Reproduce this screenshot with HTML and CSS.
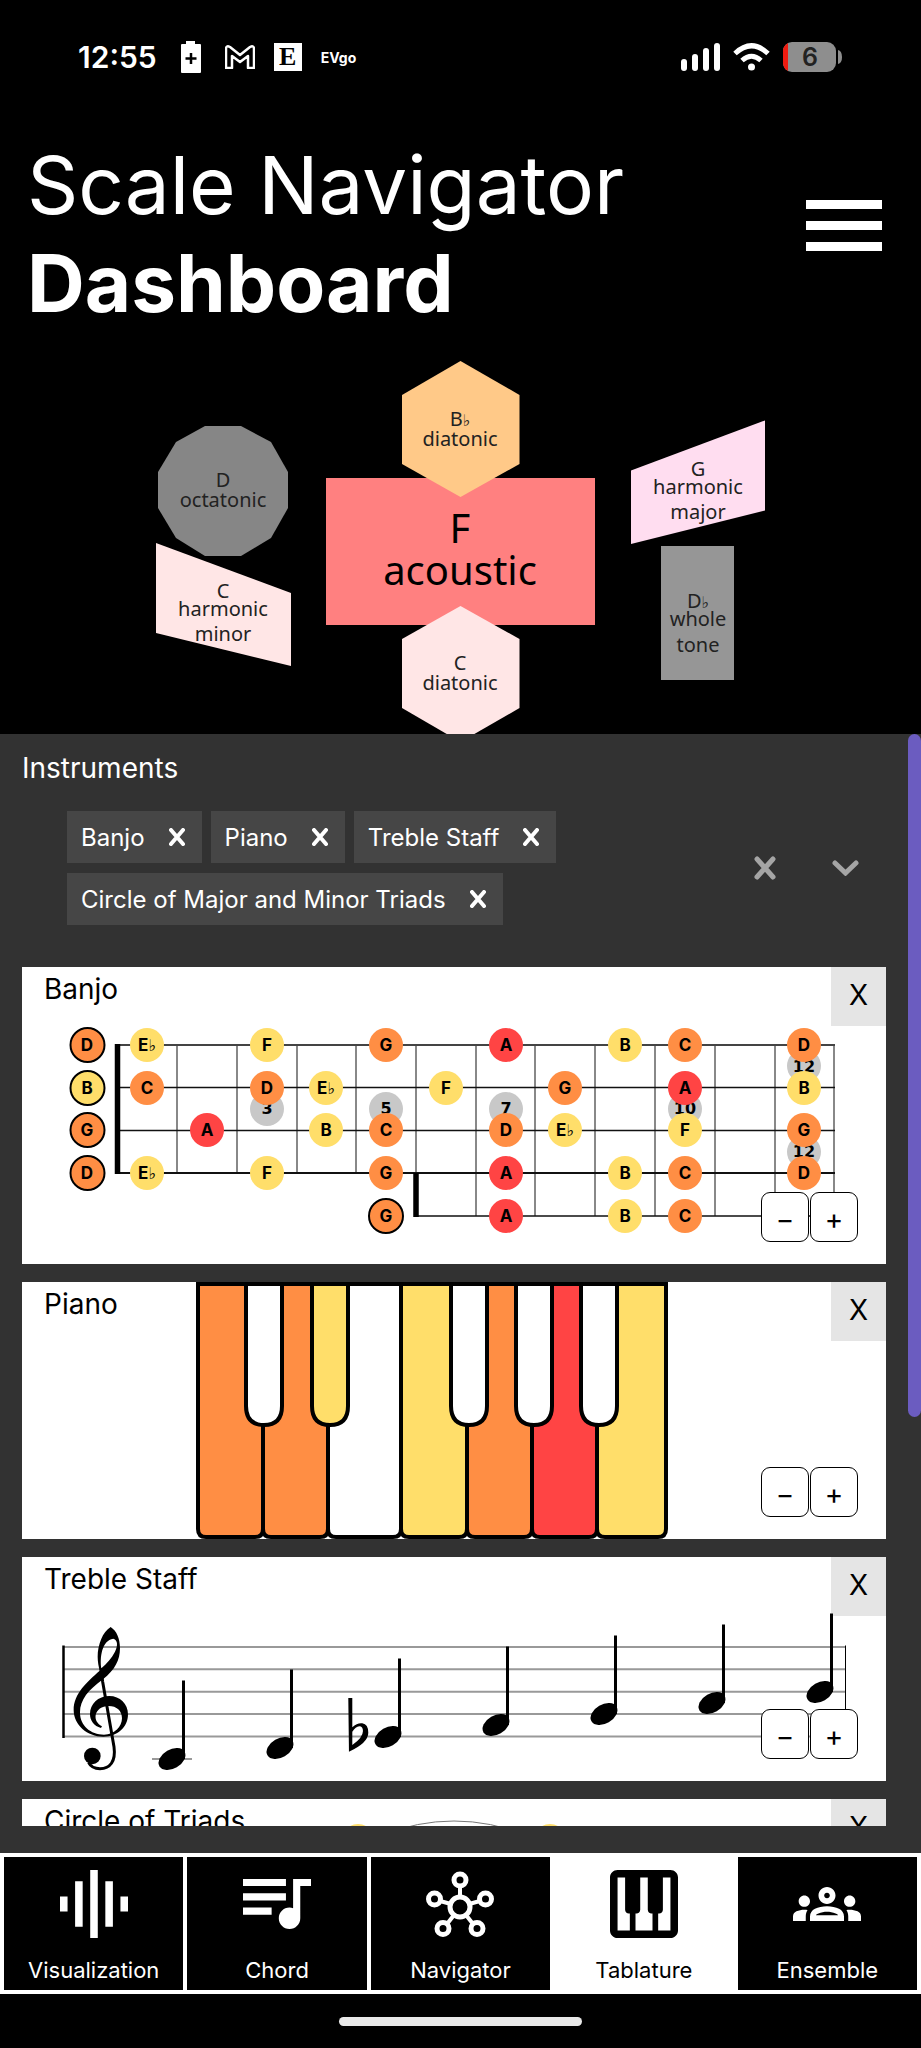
FILE: index.html
```html
<!DOCTYPE html>
<html lang="en">
  <head>
    <meta charset="UTF-8" />
    <meta name="viewport" content="width=device-width, initial-scale=1.0" />
    <title>Scale Navigator Dashboard</title>
    <link rel="stylesheet" href="styles.css">
  </head>
  <body>
    <div class="app">
      <div class="status">
        <div class="status_left">
          <span class="time">12:55</span>
          <svg width="30" height="32" viewBox="0 0 30 32">
            <path fill="#fff" d="M10 0h9v3h5q1 0 1 1v27q0 1-1 1H6q-1 0-1-1V4q0-1 1-1h4z" />
            <path stroke="#000" stroke-width="2.5" d="M15 12v11M9.5 17.5h11" />
          </svg>
          <svg width="30" height="24" viewBox="0 0 30 24">
            <path fill="none" stroke="#fff" stroke-width="2.5" stroke-linejoin="round" d="M1 4q0-4 4-2l10 8 10-8q4-2 4 2v19h-6V11l-8 6-8-6v12H1z" />
          </svg>
          <span class="news">E</span>
          <span class="evgo">EVgo</span>
        </div>
        <div class="status_right">
          <svg width="39" height="28" viewBox="0 0 39 28" fill="#fff">
            <rect x="0" y="16" width="6" height="12" rx="3" />
            <rect x="11" y="11" width="6" height="17" rx="3" />
            <rect x="22" y="5" width="6" height="23" rx="3" />
            <rect x="33" y="0" width="6" height="28" rx="3" />
          </svg>
          <svg width="37" height="28" viewBox="0 0 37 28" fill="none" stroke="#fff" stroke-width="5">
            <path d="M2 10.5Q18.500-5 35 10.5" />
            <path d="M9 17.5Q18.5 9 28 17.5" />
            <circle cx="18.5" cy="24" r="3.5" fill="#fff" stroke="none" />
          </svg>
          <svg width="59" height="30" viewBox="0 0 59 30">
            <rect width="53" height="30" rx="9" fill="#8e8e8e" />
            <path fill="#f01b10" d="M5 1v28Q0 26 0 21V9Q0 4 5 1z" />
            <path fill="#8e8e8e" d="M55 8q4 1 4 7t-4 7z" />
            <text x="27" y="24" class="battery_text">6</text>
          </svg>
        </div>
      </div>

      <header class="header">
        <h1>Scale Navigator<br /><b>Dashboard</b></h1>
        <button class="menu_button" aria-label="Menu">
          <span></span>
          <span></span>
          <span></span>
        </button>
      </header>

      <svg class="map" viewBox="0 350 921 384">
        <rect x="326" y="478" width="269" height="147" fill="#ff8080" />
        <polygon fill="#868686" points="205,426 241,426 271,442 288,472 288,508 271,538 241,556 205,556 176,538 158,508 158,472 176,442" />
        <polygon fill="#ffe6e6" points="156,543 291,593 291,666 156,633" />
        <polygon fill="#ffc988" points="460.5,361 519.5,395 519.5,464 460.5,497 402,464 402,395" />
        <polygon fill="#ffe6e6" points="460.5,606 519.5,639 519.5,708 460.5,742 402,708 402,639" />
        <polygon fill="#ffddf0" points="631,470.5 765,420.5 765,510.5 631,544" />
        <rect x="661" y="546" width="73" height="134" fill="#969696" />
        <g class="scale_name">
          <text x="223" y="487">D</text>
          <text x="223" y="507">octatonic</text>
          <text x="223" y="598">C</text>
          <text x="223" y="616">harmonic</text>
          <text x="223" y="641">minor</text>
          <text x="460" y="426">B<tspan class="flat">♭</tspan></text>
          <text x="460" y="446">diatonic</text>
          <text x="460" y="670">C</text>
          <text x="460" y="690">diatonic</text>
          <text x="698" y="476">G</text>
          <text x="698" y="494">harmonic</text>
          <text x="698" y="519">major</text>
          <text x="698" y="608">D<tspan class="flat">♭</tspan></text>
          <text x="698" y="626">whole</text>
          <text x="698" y="652">tone</text>
        </g>
        <g class="scale_name current">
          <text x="460" y="543">F</text>
          <text x="460" y="585">acoustic</text>
        </g>
      </svg>

      <main class="panel">
        <div class="content">
          <h2>Instruments</h2>
          <div class="select">
            <div class="chips">
              <span class="chip">Banjo<button aria-label="Remove Banjo"><svg viewBox="0 0 16 18"><path d="M2 2l12 14M14 2L2 16" /></svg></button></span>
              <span class="chip">Piano<button aria-label="Remove Piano"><svg viewBox="0 0 16 18"><path d="M2 2l12 14M14 2L2 16" /></svg></button></span>
              <span class="chip">Treble Staff<button aria-label="Remove Treble Staff"><svg viewBox="0 0 16 18"><path d="M2 2l12 14M14 2L2 16" /></svg></button></span>
              <span class="chip">Circle of Major and Minor Triads<button aria-label="Remove Circle of Major and Minor Triads"><svg viewBox="0 0 16 18"><path d="M2 2l12 14M14 2L2 16" /></svg></button></span>
            </div>
            <button class="indicator" aria-label="Clear all"><svg width="22" height="24" viewBox="0 0 22 24"><path d="M3 3l16 18M19 3L3 21" /></svg></button>
            <button class="indicator" aria-label="Open list"><svg width="27" height="16" viewBox="0 0 27 16"><path d="M3 3l10.500 10L24 3" /></svg></button>
          </div>

          <div class="list">
            <section class="card">
              <h3>Banjo</h3>
              <button class="close_button">X</button>
              <svg viewBox="0 0 864 297">
                <g stroke="#888" stroke-width="2">
                  <path d="M155 78v128M215 78v128M275 78v128M334 78v128M394 78v128" />
                  <path d="M454 78v171M513 78v171M573 78v171M633 78v171M693 78v171M753 78v171M812 78v171" />
                </g>
                <g stroke="#111">
                  <path stroke="#444" stroke-width="2" d="M95 78h718" />
                  <path stroke-width="1.5" d="M95 120.5h718M95 163.5h718M394 249h419" />
                  <path stroke-width="2" d="M95 206h718" />
                </g>
                <path stroke="#000" stroke-width="5.5" d="M95.5 77v130M394 206v44" />
                <g fill="#c8c8c8">
                  <circle cx="245" cy="142" r="17" />
                  <circle cx="364" cy="142" r="17" />
                  <circle cx="484" cy="142" r="17" />
                  <circle cx="663" cy="142" r="17" />
                  <circle cx="782" cy="99" r="17" />
                  <circle cx="782" cy="185" r="17" />
                </g>
                <g class="fret_number">
                  <text x="245" y="147">3</text>
                  <text x="364" y="147">5</text>
                  <text x="484" y="147">7</text>
                  <text x="663" y="147">10</text>
                  <text x="782" y="105">12</text>
                  <text x="782" y="190">12</text>
                </g>
                <g fill="#ff8e44">
                  <circle cx="364" cy="78" r="17" />
                  <circle cx="663" cy="78" r="17" />
                  <circle cx="782" cy="78" r="17" />
                  <circle cx="125" cy="121" r="17" />
                  <circle cx="245" cy="121" r="17" />
                  <circle cx="543" cy="121" r="17" />
                  <circle cx="364" cy="163" r="17" />
                  <circle cx="484" cy="163" r="17" />
                  <circle cx="782" cy="163" r="17" />
                  <circle cx="364" cy="206" r="17" />
                  <circle cx="663" cy="206" r="17" />
                  <circle cx="782" cy="206" r="17" />
                  <circle cx="663" cy="249" r="17" />
                </g>
                <g fill="#ffde6a">
                  <circle cx="125" cy="78" r="17" />
                  <circle cx="245" cy="78" r="17" />
                  <circle cx="603" cy="78" r="17" />
                  <circle cx="304" cy="121" r="17" />
                  <circle cx="424" cy="121" r="17" />
                  <circle cx="782" cy="121" r="17" />
                  <circle cx="304" cy="163" r="17" />
                  <circle cx="543" cy="163" r="17" />
                  <circle cx="663" cy="163" r="17" />
                  <circle cx="125" cy="206" r="17" />
                  <circle cx="245" cy="206" r="17" />
                  <circle cx="603" cy="206" r="17" />
                  <circle cx="603" cy="249" r="17" />
                </g>
                <g fill="#ff4444">
                  <circle cx="484" cy="78" r="17" />
                  <circle cx="663" cy="121" r="17" />
                  <circle cx="185" cy="163" r="17" />
                  <circle cx="484" cy="206" r="17" />
                  <circle cx="484" cy="249" r="17" />
                </g>
                <!-- open strings -->
                <g fill="#ff8e44" stroke="#000" stroke-width="2">
                  <circle cx="65.5" cy="78" r="17" />
                  <circle cx="65.5" cy="121" r="17" fill="#ffde6a" />
                  <circle cx="65.5" cy="163" r="17" />
                  <circle cx="65.5" cy="206" r="17" />
                  <circle cx="364" cy="249" r="17" />
                </g>
                <g class="note">
                  <text x="65" y="84">D</text>
                  <text x="125" y="84">E<tspan class="flat">♭</tspan></text>
                  <text x="245" y="84">F</text>
                  <text x="364" y="84">G</text>
                  <text x="484" y="84">A</text>
                  <text x="603" y="84">B</text>
                  <text x="663" y="84">C</text>
                  <text x="782" y="84">D</text>
                  <text x="65" y="127">B</text>
                  <text x="125" y="127">C</text>
                  <text x="245" y="127">D</text>
                  <text x="304" y="127">E<tspan class="flat">♭</tspan></text>
                  <text x="424" y="127">F</text>
                  <text x="543" y="127">G</text>
                  <text x="663" y="127">A</text>
                  <text x="782" y="127">B</text>
                  <text x="65" y="169">G</text>
                  <text x="185" y="169">A</text>
                  <text x="304" y="169">B</text>
                  <text x="364" y="169">C</text>
                  <text x="484" y="169">D</text>
                  <text x="543" y="169">E<tspan class="flat">♭</tspan></text>
                  <text x="663" y="169">F</text>
                  <text x="782" y="169">G</text>
                  <text x="65" y="212">D</text>
                  <text x="125" y="212">E<tspan class="flat">♭</tspan></text>
                  <text x="245" y="212">F</text>
                  <text x="364" y="212">G</text>
                  <text x="484" y="212">A</text>
                  <text x="603" y="212">B</text>
                  <text x="663" y="212">C</text>
                  <text x="782" y="212">D</text>
                  <text x="364" y="255">G</text>
                  <text x="484" y="255">A</text>
                  <text x="603" y="255">B</text>
                  <text x="663" y="255">C</text>
                </g>
              </svg>
              <div class="zoom">
                <button aria-label="Smaller">−</button>
                <button aria-label="Larger">+</button>
              </div>
            </section>

            <section class="card">
              <h3>Piano</h3>
              <button class="close_button">X</button>
              <svg viewBox="0 0 864 257">
                <g stroke="#000" stroke-width="4">
                  <path fill="#ff8e44" d="M176 2h65v245q0 8-8 8h-49q-8 0-8-8z" />
                  <path fill="#ff8e44" d="M241 2h65v245q0 8-8 8h-49q-8 0-8-8z" />
                  <path fill="#fff" d="M306 2h73v245q0 8-8 8h-57q-8 0-8-8z" />
                  <path fill="#ffde6a" d="M379 2h66v245q0 8-8 8h-50q-8 0-8-8z" />
                  <path fill="#ff8e44" d="M445 2h65v245q0 8-8 8h-49q-8 0-8-8z" />
                  <path fill="#ff4444" d="M510 2h65v245q0 8-8 8h-49q-8 0-8-8z" />
                  <path fill="#ffde6a" d="M575 2h69v245q0 8-8 8h-53q-8 0-8-8z" />
                  <path fill="#fff" d="M224 2v122q0 19 18 19t18-19V2z" />
                  <path fill="#ffde6a" d="M290 2v122q0 19 18 19t18-19V2z" />
                  <path fill="#fff" d="M429 2v122q0 19 18 19t18-19V2z" />
                  <path fill="#fff" d="M494 2v122q0 19 18 19t18-19V2z" />
                  <path fill="#fff" d="M559 2v122q0 19 18 19t18-19V2z" />
                </g>
              </svg>
              <div class="zoom">
                <button aria-label="Smaller">−</button>
                <button aria-label="Larger">+</button>
              </div>
            </section>

            <section class="card">
              <h3>Treble Staff</h3>
              <button class="close_button">X</button>
              <svg viewBox="0 0 864 224">
                <defs>
                  <g id="quarter">
                    <ellipse rx="14.5" ry="9.5" transform="rotate(-30)" />
                    <path fill="none" stroke="#000" stroke-width="3" d="M11.5-78.5V0" />
                  </g>
                </defs>
                <path stroke="#999" stroke-width="2" d="M42 90h781M42 112.3h781M42 134.7h781M42 157h781M42 179.5h781M130 202h40" />
                <path stroke="#000" stroke-width="2.5" d="M41.5 88.5v92.5" />
                <path stroke="#000" d="M823.5 88.5v92.5" />
                <g transform="translate(-22 -7) scale(.3333)">
                  <path fill-rule="evenodd" d="M332 231C308 245 293 285 293 320C293 335 296 350 299 362C262 395 221 430 221 480C221 525 262 560 310 560C352 560 384 532 384 493C384 462 360 438 328 438C294 438 270 462 270 492C270 512 282 528 303 534L306 529C290 520 285 508 287 495C290 480 305 468 326 468C350 468 366 482 366 505C366 530 344 554 312 554C272 554 240 528 240 487C240 450 265 420 309 388C345 360 360 330 360 295C360 265 350 243 332 231zM340 266C355 270 353 290 345 305C335 325 320 340 304 355C299 325 305 270 340 266z" />
                  <path fill="none" stroke="#000" stroke-width="9" d="M303 355L308 395L342 590C348 635 330 656 300 656C285 656 272 650 266 638" />
                  <circle cx="277" cy="618" r="25" />
                  <path fill-rule="evenodd" d="M1045 444h12v88q15-14 30-12 18 3 18 28 0 30-58 57zM1057 545v40q32-22 32-42 0-14-11-14-11 1-21 16z" />
                </g>
                <use href="#quarter" x="150" y="202" />
                <use href="#quarter" x="258" y="191" />
                <use href="#quarter" x="366" y="180" />
                <use href="#quarter" x="474" y="168" />
                <use href="#quarter" x="582" y="157" />
                <use href="#quarter" x="690" y="146" />
                <use href="#quarter" x="798" y="135" />
              </svg>
              <div class="zoom">
                <button aria-label="Smaller">−</button>
                <button aria-label="Larger">+</button>
              </div>
            </section>

            <section class="card">
              <h3>Circle of Triads</h3>
              <button class="close_button">X</button>
              <svg viewBox="0 0 864 420">
                <circle cx="432" cy="209" r="187" fill="none" stroke="#777" />
                <circle cx="336" cy="41" r="16" fill="#ffde6a" />
                <circle cx="528" cy="41" r="16" fill="#ffde6a" />
              </svg>
            </section>
          </div>
        </div>
        <div class="scrollbar"><div class="thumb"></div></div>
      </main>

      <nav class="tabs">
        <button class="tab">
          <svg viewBox="3 3 18 18"><path d="M7 18h2V6H7zM11 21h2V3h-2zM3 14h2v-4H3zM15 18h2V6h-2zM19 10v4h2v-4z" /></svg>
          Visualization
        </button>
        <button class="tab">
          <svg viewBox="3 6 19 14"><path d="M15 6H3v2h12V6zm0 4H3v2h12v-2zM3 16h8v-2H3v2zM17 6v8.18c-.31-.11-.65-.18-1-.18-1.66 0-3 1.34-3 3s1.34 3 3 3 3-1.34 3-3V8h3V6h-5z" /></svg>
          Chord
        </button>
        <button class="tab">
          <svg viewBox="0 0 68 68">
            <g fill="none" stroke="currentColor" stroke-width="5">
              <circle cx="34" cy="37" r="10" />
              <circle cx="34" cy="10" r="6" />
              <circle cx="8.5" cy="29" r="6" />
              <circle cx="59.5" cy="29" r="6" />
              <circle cx="17" cy="58.5" r="6" />
              <circle cx="51" cy="58.5" r="6" />
              <path stroke-width="4" d="M34 16v11M14 31l11 3M54 31l-11 3M21 54l7-9M47 54l-7-9" />
            </g>
          </svg>
          Navigator
        </button>
        <button class="tab active">
          <svg viewBox="3 3 18 18"><path d="M19 3H5c-1.1 0-2 .9-2 2v14c0 1.1.9 2 2 2h14c1.1 0 2-.9 2-2V5c0-1.1-.9-2-2-2zm-5 11.5h.25V19h-4.5v-4.5H10c.55 0 1-.45 1-1V5h2v8.5c0 .55.45 1 1 1zM5 5h2v8.5c0 .55.45 1 1 1h.25V19H5V5zm14 14h-3.25v-4.5H16c.55 0 1-.45 1-1V5h2v14z" /></svg>
          Tablature
        </button>
        <button class="tab">
          <svg viewBox="0 0 24 24"><path d="M4 13c1.1 0 2-.9 2-2s-.9-2-2-2-2 .9-2 2 .9 2 2 2zm1.13 1.1c-.37-.06-.74-.1-1.13-.1-.99 0-1.93.21-2.78.58C.48 14.9 0 15.62 0 16.43V18h4.5v-1.61c0-.83.23-1.61.63-2.29zM20 13c1.1 0 2-.9 2-2s-.9-2-2-2-2 .9-2 2 .9 2 2 2zm4 3.43c0-.81-.48-1.53-1.22-1.85-.85-.37-1.79-.58-2.78-.58-.39 0-.76.04-1.13.1.4.68.63 1.46.63 2.29V18H24v-1.57zM16.24 13.65c-1.17-.52-2.61-.9-4.24-.9s-3.07.39-4.24.9C6.68 14.13 6 15.21 6 16.39V18h12v-1.61c0-1.18-.68-2.26-1.76-2.74zM8.07 16c.09-.23.13-.39.91-.69.97-.38 1.99-.56 3.02-.56s2.05.18 3.02.56c.77.3.81.46.91.69H8.07zM12 8c.55 0 1 .45 1 1s-.45 1-1 1-1-.45-1-1 .45-1 1-1m0-2c-1.66 0-3 1.34-3 3s1.34 3 3 3 3-1.34 3-3-1.34-3-3-3z" /></svg>
          Ensemble
        </button>
      </nav>
      <div class="home"><span></span></div>
    </div>
  </body>
</html>
```

FILE: styles.css
```css
* {
  margin: 0;
  padding: 0;
  box-sizing: border-box;
}
body {
  background-color: #000;
  color: #fff;
  font-family: Inter, "Liberation Sans", sans-serif;
}
button {
  border: none;
  background: none;
  color: inherit;
  font-family: inherit;
  cursor: pointer;
}
svg {
  display: block;
}
.app {
  display: flex;
  flex-direction: column;
  height: 100vh;
}

.status {
  display: flex;
  justify-content: space-between;
  align-items: center;
  height: 114px;
  padding: 0 79px 0 78px;
}
.status_left {
  display: flex;
  align-items: center;
  gap: 19px;
}
.status_right {
  display: flex;
  align-items: center;
  gap: 13px;
}
.time {
  font-size: 30px;
  font-weight: 600;
}
.news {
  width: 28px;
  height: 28px;
  background-color: #fff;
  color: #000;
  font: bold 26px/28px "Liberation Serif", serif;
  text-align: center;
}
.evgo {
  font-size: 14px;
  font-weight: 700;
}
.battery_text {
  font-size: 25px;
  font-weight: 600;
  fill: #222;
  text-anchor: middle;
}

.header {
  display: flex;
  justify-content: space-between;
  align-items: center;
  padding: 22px 39px 18px 27px;
}
.header h1 {
  font-size: 80px;
  line-height: 98px;
  font-weight: 400;
}
.header b {
  font-weight: 700;
}
.menu_button {
  display: flex;
  flex-direction: column;
  gap: 12px;
  width: 76px;
  margin-bottom: 18px;
}
.menu_button span {
  height: 9px;
  background-color: #fff;
}

.map {
  width: 100%;
  flex: none;
}
.scale_name {
  font-family: "Noto Sans", sans-serif;
  font-size: 20px;
  text-anchor: middle;
  fill: #222;
}
.current {
  font-size: 40px;
  fill: #000;
}
.flat {
  font-family: "DejaVu Sans", sans-serif;
  font-weight: 400;
  font-size: 16px;
}

.panel {
  display: flex;
  flex: 1;
  min-height: 0;
  background-color: #323232;
}
.content {
  display: flex;
  flex-direction: column;
  flex: 1;
  padding: 17px 22px 27px;
}
.content h2 {
  font-size: 28px;
  line-height: 34px;
  font-weight: 400;
}
.select {
  display: flex;
  align-items: center;
  gap: 56px;
  padding: 26px 27px 42px 45px;
}
.chips {
  display: flex;
  flex-wrap: wrap;
  flex: 1;
  gap: 10px 9px;
}
.chip {
  display: flex;
  align-items: center;
  gap: 24px;
  height: 52px;
  padding: 0 17px 0 14px;
  background-color: #464646;
  font-size: 24px;
}
.chip svg {
  width: 16px;
  height: 18px;
  fill: none;
  stroke: #fff;
  stroke-width: 4;
  stroke-linecap: round;
}
.indicator svg {
  fill: none;
  stroke: #a5a5a5;
  stroke-width: 5;
  stroke-linecap: round;
}
.scrollbar {
  width: 13px;
}
.thumb {
  height: 61%;
  border-radius: 7px;
  background-color: #6b5cc0;
}

.list {
  display: flex;
  flex-direction: column;
  flex: 1;
  gap: 18px;
  min-height: 0;
  overflow: hidden;
}
/* title, buttons and drawing are stacked in one grid cell */
.card {
  display: grid;
  flex: none;
  background-color: #fff;
  color: #000;
}
.card > * {
  grid-area: 1 / 1;
}
.card > svg {
  width: 100%;
  pointer-events: none;
}
.card h3 {
  align-self: start;
  padding: 5px 0 0 22px;
  font-size: 28px;
  line-height: 34px;
  font-weight: 400;
}
.close_button {
  align-self: start;
  justify-self: end;
  width: 55px;
  height: 59px;
  padding-bottom: 4px;
  background-color: #e5e5e5;
  font-size: 28px;
}
.zoom {
  display: flex;
  align-self: end;
  justify-self: end;
  gap: 1px;
  margin: 0 28px 22px 0;
}
.zoom button {
  width: 48px;
  height: 50px;
  padding-top: 3px;
  border: 1px solid #000;
  border-radius: 9px;
  background-color: #fff;
  font-size: 28px;
}
.note,
.fret_number {
  font-size: 16px;
  font-weight: 700;
  text-anchor: middle;
}
.note {
  font-size: 17px;
}
.fret_number {
  font-family: "DejaVu Sans", sans-serif;
}

.tabs {
  display: grid;
  grid-template-columns: repeat(5, 1fr);
  gap: 4px;
  padding: 4px;
  background-color: #fff;
}
.tab {
  display: flex;
  flex-direction: column;
  align-items: center;
  gap: 18px;
  padding: 13px 0 6px;
  background-color: #000;
  color: #fff;
  font-size: 22px;
  line-height: 28px;
}
.tab svg {
  width: 68px;
  height: 68px;
  fill: currentColor;
}
.active {
  background-color: #fff;
  color: #000;
}
.home {
  display: flex;
  justify-content: center;
  height: 54px;
  padding-top: 23px;
}
.home span {
  width: 243px;
  height: 9px;
  border-radius: 5px;
  background-color: #e8e8e8;
}
```
